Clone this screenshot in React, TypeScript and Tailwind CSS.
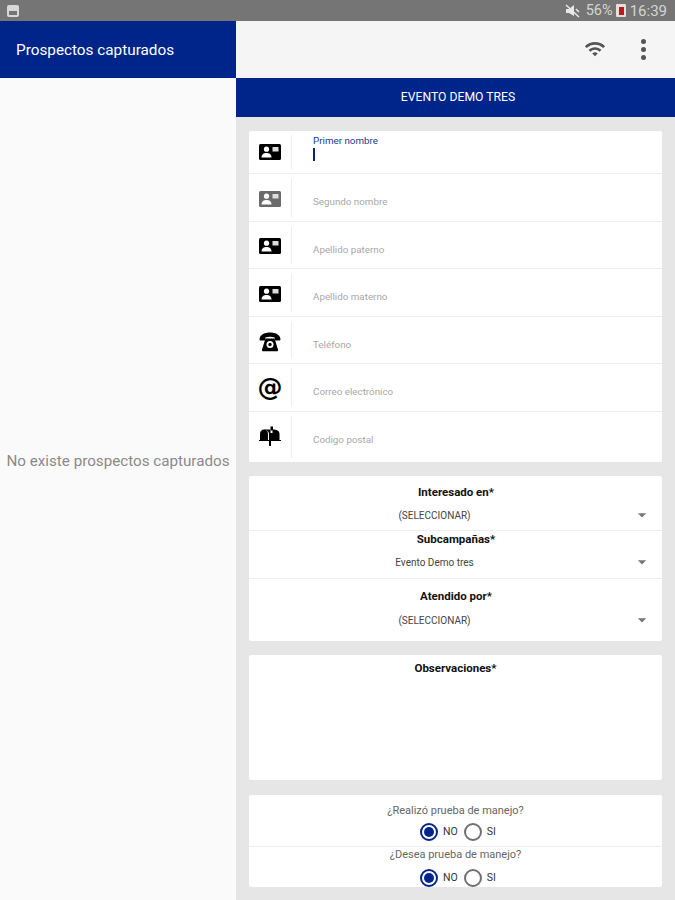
import { MdWifi, MdArrowDropDown } from "react-icons/md";

const font = "font-['Roboto',sans-serif]";

function CardIcon({ gray }: { gray?: boolean }) {
  const bg = gray ? "#6b6b6b" : "#000";
  return (
    <svg width="22" height="16" viewBox="0 0 22 16">
      <rect x="0" y="0" width="22" height="16" rx="1.5" fill={bg} />
      <circle cx="7.5" cy="5.2" r="2.6" fill="#fff" />
      <path d="M2.5 13.5c0-3 2.4-4.4 5-4.4s5 1.4 5 4.4z" fill="#fff" />
      <rect x="13.5" y="3" width="6" height="4.5" fill="#ddd" />
    </svg>
  );
}

function PhoneIcon() {
  return (
    <svg width="22" height="20" viewBox="0 0 22 20">
      <path d="M0.5 7C1 2.5 6 0.5 11 0.5S21 2.500 21.500 7c0 1-.6 1.600-1.500 1.600h-3c-.9 0-1.300-.6-1.300-1.400V5.600C14 5 12.500 4.800 11 4.800S8 5 6.300 5.600v1.600c0 .8-.4 1.400-1.300 1.400H2C1.100 8.600.5 8 .5 7z" fill="#000" />
      <path d="M6.500 6.500h9L19 17.500c.2.900-.3 1.800-1.300 1.800H4.300c-1 0-1.500-.9-1.300-1.800z" fill="#000" />
      <circle cx="11" cy="12.500" r="3.500" fill="#fff" />
      <circle cx="11" cy="12.500" r="1.700" fill="#000" />
    </svg>
  );
}

function MailboxIcon() {
  return (
    <svg width="22" height="20" viewBox="0 0 22 20">
      <path d="M1 14V8c0-3 1.800-4.500 4-4.500S9 5 9 8v6z" fill="#000" />
      <path d="M5 3.500h6.500V7h2V3.500c4 0 7 1 7 4.500v6H10V8c0-2-1.500-4-5-4.500z" fill="#000" />
      <path d="M11.500 0.500h2.500v4h-2.500z" fill="#000" />
      <rect x="0" y="14" width="22" height="1" fill="#000" />
      <rect x="10" y="15" width="2" height="5" fill="#000" />
    </svg>
  );
}

function Field({ icon, label, h, iconPad = "", active, last }: { icon: React.ReactNode; label: string; h: string; iconPad?: string; active?: boolean; last?: boolean }) {
  return (
    <div className={`flex ${h} ${last ? "" : "border-b border-[#eeeeee]"}`}>
      <div className={`w-[42px] shrink-0 flex items-center justify-center ${iconPad}`}>{icon}</div>
      <div className="w-px bg-[#eeeeee] my-1" />
      <div className="flex-1 pl-[21px] relative">
        {active ? (
          <div className="pt-[4px]">
            <p className="text-[9.8px] leading-[12px] text-[#1d3a8f]">{label}</p>
            <div className="w-[2px] h-[13px] bg-[#00258a] mt-[1px]" />
          </div>
        ) : (
          <p className="text-[9.8px] leading-[12px] text-[#a8a8a8] pt-[22px]">{label}</p>
        )}
      </div>
    </div>
  );
}

function SelectRow({ title, value, h, titleClass, valueClass, last }: { title: string; value: string; h: string; titleClass: string; valueClass: string; last?: boolean }) {
  return (
    <div className={`${h} flex flex-col relative ${last ? "" : "border-b border-[#eeeeee]"}`}>
      <p className={`text-center text-[11.5px] leading-[14px] font-bold text-[#111] pl-[1px] ${titleClass}`}>{title}</p>
      <div className={`flex items-center ${valueClass}`}>
        <span className="flex-1 text-center text-[10px] leading-[12px] text-[#444] pr-[12px]">{value}</span>
        <MdArrowDropDown className="text-[#777] mr-[10px] -translate-y-px" size={20} />
      </div>
    </div>
  );
}

function Radio({ on }: { on?: boolean }) {
  return on ? (
    <span className="w-[18px] h-[18px] rounded-full border-2 border-[#00258a] flex items-center justify-center">
      <span className="w-[10px] h-[10px] rounded-full bg-[#00258a]" />
    </span>
  ) : (
    <span className="w-[18px] h-[18px] rounded-full border-2 border-[#707070]" />
  );
}

function RadioRow({ title, className, gap }: { title: string; className: string; gap: string }) {
  return (
    <div className={className}>
      <p className="text-center text-[11px] leading-[14px] text-[#666]">{title}</p>
      <div className={`flex items-center justify-center pl-[5px] ${gap}`}>
        <Radio on />
        <span className="text-[10.5px] text-[#333] ml-[5px] mr-[6px]">NO</span>
        <Radio />
        <span className="text-[10.5px] text-[#333] ml-[5px]">SI</span>
      </div>
    </div>
  );
}

export default function App() {
  return (
    <div className={`w-[675px] h-[900px] overflow-hidden flex flex-col bg-[#fafafa] ${font}`}>
      {/* Status bar */}
      <div className="h-[21px] shrink-0 bg-[#757575] flex items-center pl-[7px] pr-[8px]">
        <div className="w-[12px] h-[12px] rounded-[2px] bg-[#d8d8d8] flex items-end justify-center pb-[2px]">
          <div className="w-[8px] h-[4px] bg-[#757575]" />
        </div>
        <div className="flex-1" />
        <svg width="15" height="14" viewBox="0 0 15 14" className="mr-[6px]">
          <path d="M1 5h3l5-4v11L4 9H1z" fill="#e8e8e8" />
          <path d="M1 1l13 12" stroke="#e8e8e8" strokeWidth="1.500" />
          <path d="M11 5l3 3" stroke="#e8e8e8" strokeWidth="1.500" />
        </svg>
        <span className="text-[14.5px] text-[#d4d4d4] leading-none pt-[2px]">56%</span>
        <div className="relative w-[10px] h-[13px] bg-[#e0e0e0] rounded-[1px] ml-[3px] mr-[4px]">
          <div className="absolute left-[3px] top-[3px] w-[5px] h-[8px] bg-[#c01818]" />
        </div>
        <span className="text-[15px] text-[#d4d4d4] leading-none pt-[2px]">16:39</span>
      </div>

      <div className="flex-1 flex min-h-0">
        {/* Left panel */}
        <div className="w-[236px] shrink-0 flex flex-col bg-[#fafafa]">
          <div className="h-[57px] bg-[#00258a] flex items-center pl-[16px] pt-[2px]">
            <span className="text-white text-[15.3px]">Prospectos capturados</span>
          </div>
          <div className="flex-1 flex items-center justify-center pb-[56px]">
            <span className="text-[15.200px] text-[#8a8a8a] whitespace-nowrap">No existe prospectos capturados</span>
          </div>
        </div>

        {/* Right panel */}
        <div className="flex-1 flex flex-col bg-[#e6e6e6]">
          <div className="h-[57px] shrink-0 bg-[#f5f5f5] flex items-center justify-end pb-[1px]">
            <MdWifi className="text-[#555] mr-[35px]" size={22} />
            <div className="flex flex-col gap-[3px] mr-[29px]">
              <span className="w-[5px] h-[5px] rounded-full bg-[#555]" />
              <span className="w-[5px] h-[5px] rounded-full bg-[#555]" />
              <span className="w-[5px] h-[5px] rounded-full bg-[#555]" />
            </div>
          </div>
          <div className="h-[39px] shrink-0 bg-[#00258a] flex items-center justify-center pl-[5px]">
            <span className="text-white text-[12.2px]">EVENTO DEMO TRES</span>
          </div>

          <div className="pl-[13px] pr-[13px] pt-[14px] flex flex-col">
            <div className="bg-white h-[331px] rounded-[2px] flex flex-col">
              <Field icon={<CardIcon />} label="Primer nombre" h="h-[43px]" active />
              <Field icon={<CardIcon gray />} label="Segundo nombre" h="h-[48px]" iconPad="pt-[2px]" />
              <Field icon={<CardIcon />} label="Apellido paterno" h="h-[47px]" iconPad="pt-[2px]" />
              <Field icon={<CardIcon />} label="Apellido materno" h="h-[48px]" iconPad="pt-[2px]" />
              <Field icon={<PhoneIcon />} label="Teléfono" h="h-[47px]" iconPad="pt-[3px]" />
              <Field icon={<span className="text-[25px] leading-none font-bold text-black font-['DejaVu_Sans',sans-serif]">@</span>} label="Correo electrónico" h="h-[48px]" />
              <Field icon={<MailboxIcon />} label="Codigo postal" h="h-[50px]" iconPad="pb-[2px]" last />
            </div>

            <div className="bg-white h-[165px] mt-[14px] rounded-[2px] flex flex-col">
              <SelectRow title="Interesado en*" value="(SELECCIONAR)" h="h-[55px]" titleClass="pt-[9px]" valueClass="mt-[7px]" />
              <SelectRow title="Subcampañas*" value="Evento Demo tres" h="h-[48px]" titleClass="pt-[1px]" valueClass="mt-[7px]" />
              <SelectRow title="Atendido por*" value="(SELECCIONAR)" h="h-[62px]" titleClass="pt-[10px]" valueClass="mt-[8px]" last />
            </div>

            <div className="bg-white h-[125px] mt-[14px] rounded-[2px] pt-[6px]">
              <p className="text-center text-[11.5px] leading-[14px] font-bold text-[#111]">Observaciones*</p>
            </div>

            <div className="bg-white h-[92px] mt-[15px] rounded-[2px] flex flex-col">
              <RadioRow title="¿Realizó prueba de manejo?" className="h-[52px] pt-[9px] border-b border-[#eeeeee]" gap="mt-[5px]" />
              <RadioRow title="¿Desea prueba de manejo?" className="pt-[1px]" gap="mt-[7px]" />
            </div>
          </div>
        </div>
      </div>
    </div>
  );
}
